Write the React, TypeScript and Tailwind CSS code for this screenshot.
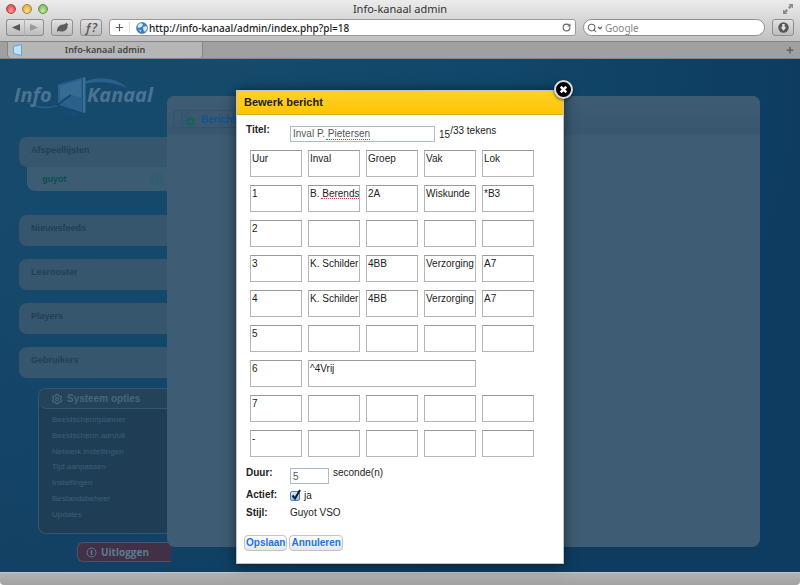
import { ChevronDown, Plus, RotateCw, Search, Settings } from "lucide-react"

const menuItems = ["Nieuwsfeeds", "Lesrooster", "Players", "Gebruikers"]

const systemItems = [
  "Beeldschermplanner",
  "Beeldscherm aan/uit",
  "Netwerk instellingen",
  "Tijd aanpassen",
  "Instellingen",
  "Bestandsbeheer",
  "Updates",
]

const columns = ["Uur", "Inval", "Groep", "Vak", "Lok"]

const rows = [
  columns,
  ["1", "B. Berends", "2A", "Wiskunde", "*B3"],
  ["2", "", "", "", ""],
  ["3", "K. Schilder", "4BB", "Verzorging", "A7"],
  ["4", "K. Schilder", "4BB", "Verzorging", "A7"],
  ["5", "", "", "", ""],
  ["6", "^4Vrij"],
  ["7", "", "", "", ""],
  ["-", "", "", "", ""],
]

const toolButton =
  "flex h-[17px] items-center justify-center rounded-[3px] border border-[#8f8f8f] bg-linear-to-b from-[#e2e2e2] to-[#bcbcbc] text-[#555]"

function BrowserBar() {
  return (
    <header className="bg-linear-to-b from-[#ececec] to-[#adadad] font-['Noto_Sans','Open_Sans',sans-serif] text-[#333]">
      <div className="grid h-[18px] grid-cols-[1fr_auto_1fr] items-center px-[6px]">
        <div className="flex gap-[6px]">
          <span className="size-[10px] rounded-full border border-[#a34743] bg-radial-[at_50%_75%] from-[#ff9c98] to-[#d8393c]" />
          <span className="size-[10px] rounded-full border border-[#a9803c] bg-radial-[at_50%_75%] from-[#ffe08a] to-[#dd9a35]" />
          <span className="size-[10px] rounded-full border border-[#5d8c4a] bg-radial-[at_50%_75%] from-[#c4ee9c] to-[#69ae50]" />
        </div>
        <h1 className="text-[11px] leading-4">Info-kanaal admin</h1>
        <svg className="size-3 justify-self-end" viewBox="0 0 12 12" fill="#8a8a8a">
          <path d="M6.500 1H11v4.500L9.600 4.100 7.700 6 6 4.300l1.900-1.900zM5.500 11H1V6.500l1.400 1.400L4.300 6 6 7.700 4.100 9.600z" />
        </svg>
      </div>

      <div className="flex h-[23px] items-start gap-[7px] px-[6px] pt-px">
        <div className="flex">
          <button aria-label="Vorige" className={`${toolButton} w-[19px] rounded-r-none border-r-[#b0b0b0]`}>
            <svg className="h-[7px] w-2" viewBox="0 0 8 7" fill="#555"><path d="M8 0v7L0 3.500z" /></svg>
          </button>
          <button aria-label="Volgende" className={`${toolButton} w-[19px] rounded-l-none border-l-0`}>
            <svg className="h-[7px] w-2" viewBox="0 0 8 7" fill="#999"><path d="M0 0v7l8-3.500z" /></svg>
          </button>
        </div>
        <button aria-label="Extensie" className={`${toolButton} w-[22px]`}>
          <svg className="h-[11px] w-[13px]" viewBox="0 0 13 11" fill="#5c5c5c">
            <path d="M1 10.500c.3-1.500 0-2.400.4-3.900C2 4 4.500 2.300 7.500 2.400c1.200 0 2-.7 3-1.900l.6 1.300L12.500 2l-1 1.200c.6 3.300-2.300 6.300-5.700 6.300-1.600 0-2.600-.6-3.600-.5z" />
          </svg>
        </button>
        <button aria-label="Lettertype" className={`${toolButton} w-[22px] font-['Open_Sans',sans-serif] text-[12px] font-semibold italic leading-none`}>
          ƒ?
        </button>
        <div className="flex h-[17px] min-w-0 flex-1 items-center rounded-[3px] border border-[#9a9a9a] bg-white pr-1">
          <button aria-label="Bladwijzer toevoegen" className="flex w-5 justify-center border-r border-[#ddd] text-[#555]">
            <Plus size={11} strokeWidth={2.500} />
          </button>
          <svg className="ml-[6px] size-3 shrink-0" viewBox="0 0 12 12">
            <circle cx="6" cy="6" r="5.500" fill="#3f7fc4" stroke="#3567a5" strokeWidth=".6" />
            <path d="M2 2.800 5 1l2 1.200-1 2.300-2 1-2.500.3zM7 5l3.500-1 .7 2.500L9 10 7.500 8.200zM3 7.500l2 .8-.5 2z" fill="#d5e9fa" />
          </svg>
          <input
            aria-label="Adres"
            defaultValue="http://info-kanaal/admin/index.php?pl=18"
            className="min-w-0 flex-1 pl-px text-[10px] leading-4 font-medium text-[#222] outline-none"
          />
          <button aria-label="Vernieuwen" className="text-[#666]"><RotateCw size={9} strokeWidth={3} /></button>
        </div>
        <div className="flex h-[17px] w-[182px] items-center rounded-full border border-[#8f8f8f] bg-white pl-[3px] text-[#666]">
          <Search size={10} strokeWidth={2.500} />
          <ChevronDown size={6} strokeWidth={5} />
          <input aria-label="Zoeken" placeholder="Google" className="min-w-0 flex-1 pl-[2px] text-[10px] leading-4 outline-none placeholder:text-[#888]" />
        </div>
        <button aria-label="Downloads" className={`${toolButton} w-[22px]`}>
          <svg className="size-[11px]" viewBox="0 0 11 11">
            <circle cx="5.500" cy="5.500" r="5.200" fill="#585858" />
            <path d="M4.300 2h2.400v3.200h1.600L5.500 8.800 2.700 5.200h1.600z" fill="#e4e4e4" />
          </svg>
        </button>
      </div>

      <div className="flex h-[18px] items-center border-y border-[#858585] bg-[#a0a0a0]">
        <div className="ml-[7px] flex h-4 w-[196px] items-center rounded-b-[4px] border-x border-[#858585] bg-[#b6b6b6] pl-[5px]">
          <svg className="h-3 w-[9px]" viewBox="0 0 9 12">
            <path d="M.500 2.500 8.500.500v11l-8-2z" fill="#bfe2fa" stroke="#5fa5d8" />
          </svg>
          <span className="flex-1 pr-[14px] text-center text-[9px] leading-4 font-semibold text-[#444]">Info-kanaal admin</span>
        </div>
        <button aria-label="Nieuw tabblad" className="mr-[5px] ml-auto text-[#555]"><Plus size={10} strokeWidth={3} /></button>
      </div>
    </header>
  )
}

function Logo() {
  return (
    <svg className="mt-[13px] ml-3 h-12 w-[150px]" viewBox="12 72 150 48" role="img" aria-label="Info Kanaal">
      <path d="M84 82c14-6 32-5 43 6-13-6-29-7-43-4z" fill="#28618d" />
      <path d="M28 103c12 5 23 5 34 1-10 5-24 6-34-1z" fill="#28618d" stroke="#28618d" strokeWidth=".5" />
      <path d="m57.500 84 25.500-7v36l-25.500-8z" fill="#2a6089" stroke="#164978" />
      <path d="M60 86 81 80v18c-8-4-14-4-21 2z" fill="#376c92" />
      <path d="m83 77 2.500.8v34.400L83 113z" fill="#3b7097" />
      <path d="m57.500 105 13.500-10" stroke="#123f6d" strokeWidth="1.500" />
      <path d="M66 109v2l-3 1 6 4 8-1-2-2-3 1v-3" fill="none" stroke="#174c7c" strokeWidth="1.500" />
      <g fill="#4b7393" fontFamily="'Open Sans', sans-serif" fontSize="20" fontWeight="700" fontStyle="italic">
        <text x="14" y="102">Info</text>
        <text x="87" y="102">Kanaal</text>
      </g>
    </svg>
  )
}

function Sidebar() {
  return (
    <nav className="flex w-[167px] shrink-0 flex-col text-[9px] leading-[14px] font-bold text-[#213f59]">
      <Logo />
      <a href="#afspeellijsten" className="mt-[17px] ml-[19px] block h-[30px] rounded-l-lg bg-[#36566d] pt-[6px] pl-3">
        Afspeellijsten
      </a>
      <a href="#guyot" className="ml-[27px] flex h-6 items-center rounded-bl-lg bg-[#3b5c73] pr-[3px] pl-[15px] text-[#07514e]">
        guyot
        <svg className="ml-auto size-[14px]" viewBox="0 0 14 14" fill="none" stroke="#305e70" strokeWidth="2">
          <circle cx="7" cy="7" r="5.500" />
          <path d="m5.500 4 3 3-3 3" />
        </svg>
      </a>
      <div className="mt-6 ml-[19px] flex flex-col gap-[13px]">
        {menuItems.map((item) => (
          <a key={item} href={`#${item.toLowerCase()}`} className="h-[31px] rounded-l-lg bg-[#36566d] pt-[6px] pl-3">
            {item}
          </a>
        ))}
      </div>

      <section className="mt-[10px] ml-[38px] rounded-l-lg border border-r-0 border-[#36566c] bg-[#1f3e56]">
        <h2 className="flex h-5 items-center gap-1 rounded-l-lg border-b border-[#36566c] bg-[#23435b] pl-3 text-[10px] text-[#45677e]">
          <Settings size={12} strokeWidth={2.500} />
          Systeem opties
        </h2>
        <ul className="flex h-[124px] flex-col justify-between pt-1 pb-[11px] pl-[13px] text-[8px] font-normal text-[#3b5f78]">
          {systemItems.map((item) => (
            <li key={item}><a href="#systeem">{item}</a></li>
          ))}
        </ul>
      </section>

      <button className="mt-2 -mr-1 ml-[77px] flex h-5 items-center gap-1 rounded-l-[6px] border border-r-0 border-[#52506a] bg-[#423047] pl-2 font-['Open_Sans',sans-serif] text-[10px] text-[#5c7c94]">
        <svg className="size-[11px]" viewBox="0 0 11 11" fill="none" stroke="currentColor">
          <circle cx="5.500" cy="5.500" r="4.500" />
          <path d="M5.500 3v5" strokeWidth="1.500" />
        </svg>
        Uitloggen
      </button>
    </nav>
  )
}

function Cell({ value, label }: { value: string; label: string }) {
  return (
    <div className="relative">
      <textarea
        aria-label={label}
        wrap="off"
        spellCheck={false}
        defaultValue={value}
        className="block h-[27px] w-full resize-none overflow-hidden border border-[#b5b5b5] border-t-[#999] bg-white pt-px pl-px leading-[14px] outline-none"
      />
      {value === "B. Berends" && (
        <span className="absolute top-[13px] right-px left-[13px] border-b border-dotted border-[#f33]" />
      )}
    </div>
  )
}

function MessageTable() {
  return (
    <table className="w-[296px] table-fixed border-separate border-spacing-x-[6px] border-spacing-y-2">
      <tbody>
        {rows.map((row, r) => (
          <tr key={r}>
            {row.map((value, c) => (
              <td key={c} colSpan={row.length === 2 && c === 1 ? 3 : 1} className="p-0">
                <Cell value={value} label={`${columns[c]}, rij ${r + 1}`} />
              </td>
            ))}
          </tr>
        ))}
      </tbody>
    </table>
  )
}

const actionButton =
  "h-4 rounded-[4px] border border-[#c4c4c4] bg-linear-to-b from-white to-[#e6e6e6] px-px leading-3 font-bold text-[#1c74e8]"

function EditDialog() {
  return (
    <div role="dialog" aria-labelledby="dialog-title" className="relative w-[328px] border border-[#b9c4cc] bg-white shadow-[0_1px_12px_rgba(0,0,0,0.55)]">
      <h2 id="dialog-title" className="h-6 border-b border-[#d9ac2a] bg-linear-to-b from-[#ffd023] to-[#ffc400] pl-[7px] text-[11px] leading-[22px] font-bold text-[#222]">
        Bewerk bericht
      </h2>
      <button aria-label="Sluiten" className="absolute -top-[11px] -right-[10px] flex size-[19px] items-center justify-center rounded-full border-2 border-[#ddd] bg-black shadow-[0_1px_3px_rgba(0,0,0,0.6)]">
        <svg className="size-[7px]" viewBox="0 0 7 7" stroke="#fff" strokeWidth="2.500"><path d="m.700.700 5.600 5.600M6.300.700.700 6.300" /></svg>
      </button>

      <form className="pt-2 pb-3 pl-[7px] text-[10px] leading-[13px] text-[#222]">
        <div className="grid grid-cols-[44px_1fr] pl-[2px]">
          <label htmlFor="titel" className="font-bold">Titel:</label>
          <div className="flex gap-1 pt-[3px]">
            <div className="relative">
              <input id="titel" defaultValue="Inval P. Pietersen" spellCheck={false} className="block h-4 w-[145px] border border-[#a9bdd3] pb-px pl-[2px] text-[#555] outline-none" />
              <span className="absolute top-[13px] left-9 w-11 border-b border-dotted border-[#f33]" />
            </div>
            <p className="flex items-start">
              <span className="pt-[2px]">15</span>
              <span className="-mt-[2px]">/33 tekens</span>
            </p>
          </div>
        </div>

        <MessageTable />

        <div className="grid grid-cols-[44px_1fr] gap-y-1 pt-px pl-[2px]">
          <label htmlFor="duur" className="font-bold">Duur:</label>
          <div className="flex gap-1">
            <input id="duur" defaultValue="5" className="mt-[2px] block h-4 w-[39px] border border-[#a9bdd3] pl-[2px] text-[#555] outline-none" />
            <span>seconde(n)</span>
          </div>
          <label htmlFor="actief" className="font-bold">Actief:</label>
          <div className="flex items-center gap-1 pt-px">
            <span className="relative">
              <input id="actief" type="checkbox" defaultChecked className="block size-[10px] appearance-none rounded-[2px] border border-[#5c7fae] bg-linear-to-b from-[#d9eafb] to-[#8ebdec]" />
              <svg className="pointer-events-none absolute bottom-0 left-0 size-3" viewBox="0 0 12 12" fill="none" stroke="#0e1d33" strokeWidth="2">
                <path d="m2.500 6.500 2.500 3L10 1" />
              </svg>
            </span>
            <span>ja</span>
          </div>
          <span className="font-bold">Stijl:</span>
          <span>Guyot VSO</span>
        </div>

        <div className="mt-4 flex gap-[2px]">
          <button type="button" className={actionButton}>Opslaan</button>
          <button type="button" className={actionButton}>Annuleren</button>
        </div>
      </form>
    </div>
  )
}

export default function App() {
  return (
    <div className="flex min-h-screen flex-col bg-white font-['Liberation_Sans',Arial,sans-serif]">
      <BrowserBar />

      <main className="grid flex-1 bg-[#0d3c60] bg-[radial-gradient(circle_at_30%_0%,#144a6b_0%,#11476a_35%,#0d3c60_75%)]">
        <div className="col-start-1 row-start-1 flex items-start bg-linear-to-r from-[#2a537433] to-transparent to-40% pr-10">
          <Sidebar />
          <section className="relative mt-[37px] h-[451px] flex-1 rounded-lg bg-[#3e5c73]">
            <div className="h-[39px] rounded-t-lg border-b border-[#3a5a71] bg-linear-to-b from-[#3e5c73] to-[#38576f] pt-[14px] pl-[6px]">
              <button className="flex h-[18px] w-[120px] items-center rounded-[3px] border border-[#2f5270] pl-[7px] text-[10px] font-bold text-[#14538c]">
                <svg className="mr-[6px] size-[14px]" viewBox="0 0 14 14" fill="none">
                  <path d="M1 1h8v11H1zM3 3.500h4M3 6h4M3 8.500h2" stroke="#2c5575" />
                  <circle cx="9.500" cy="9.500" r="3" stroke="#12664f" strokeWidth="2" />
                </svg>
                Bericht
              </button>
            </div>
          </section>
        </div>

        <div className="z-10 col-start-1 row-start-1 flex items-start justify-center pt-[31px] pb-2">
          <EditDialog />
        </div>
      </main>

      <footer className="h-[13px] rounded-b-[4px] border-t border-[#c4c4c4] bg-linear-to-b from-[#b2b2b2] to-[#a2a2a2]" />
    </div>
  )
}
